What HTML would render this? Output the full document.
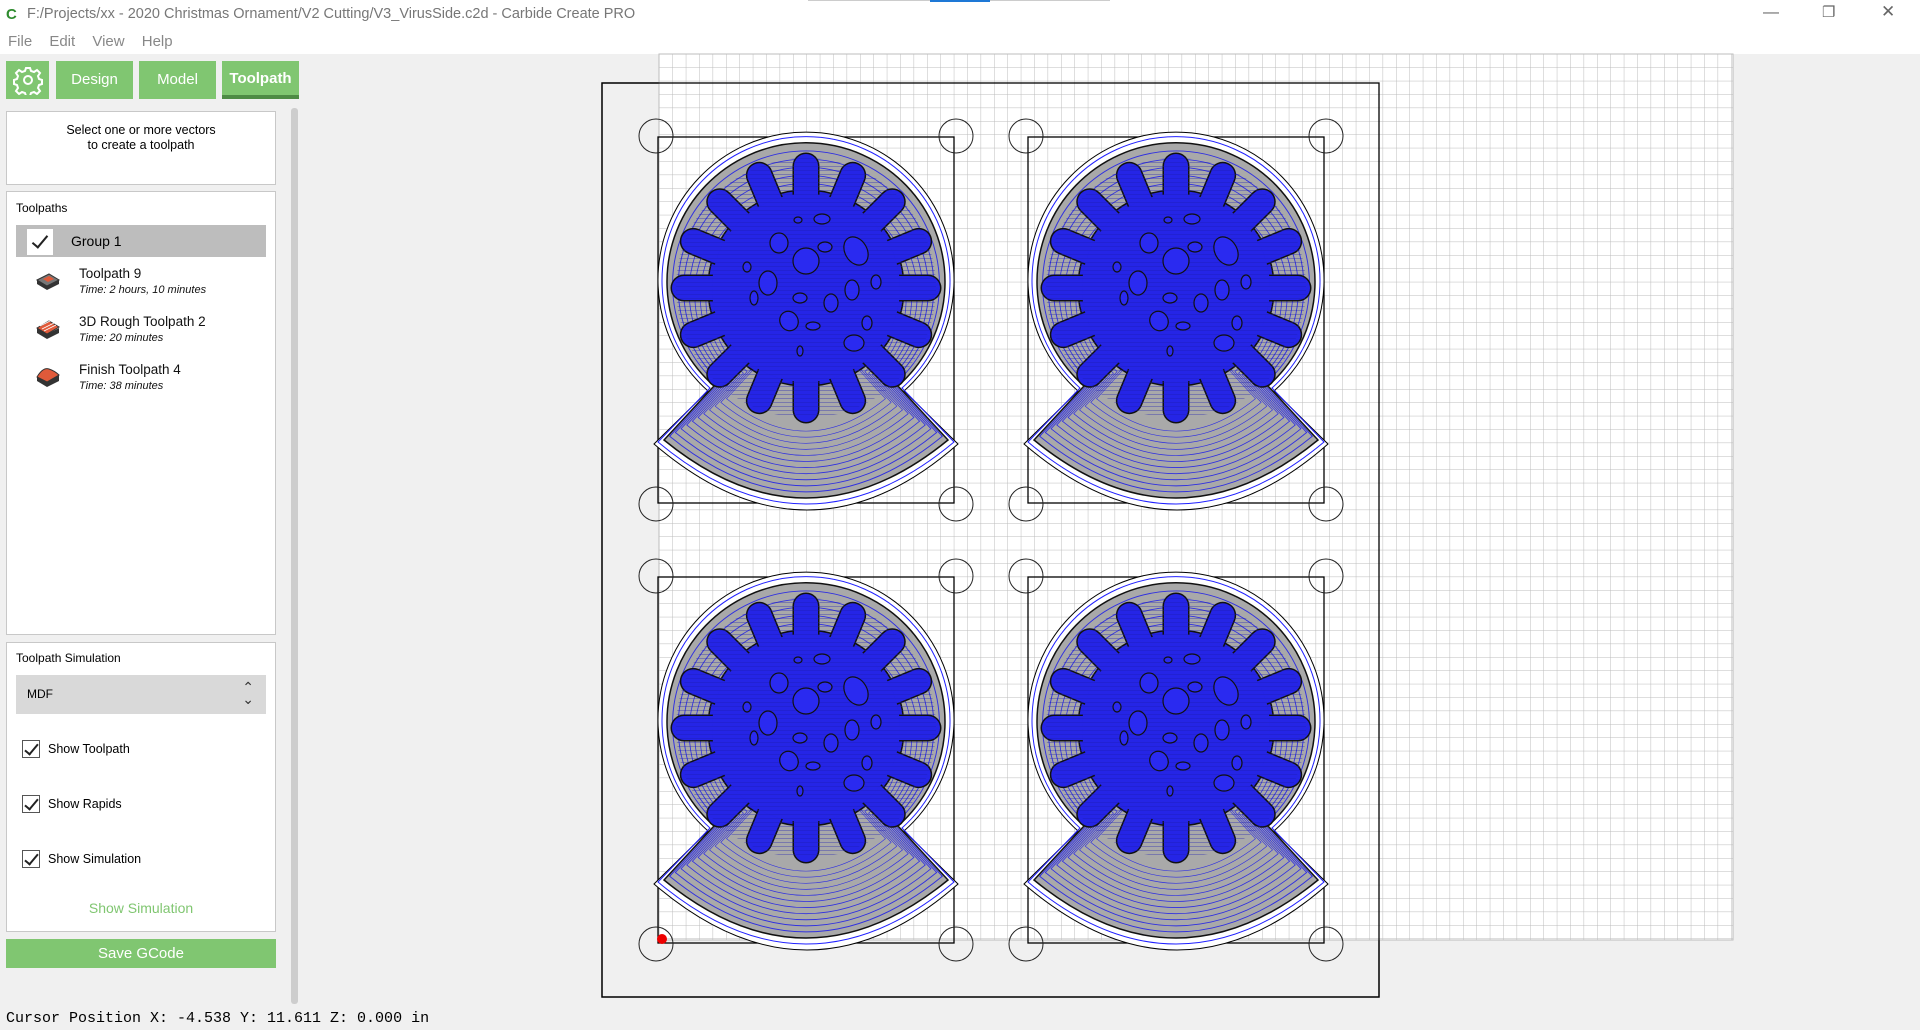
<!DOCTYPE html>
<html><head><meta charset="utf-8"><style>
*{margin:0;padding:0;box-sizing:border-box}
body{width:1920px;height:1030px;background:#f0f0f0;font-family:"Liberation Sans",sans-serif;position:relative;overflow:hidden}
.a{position:absolute}
.tab{position:absolute;top:61px;height:38px;background:#80c671;color:#fff;font-size:15px;text-align:center;line-height:38px}
.box{position:absolute;background:#fff;border:1px solid #c8c8c8}
.cb{position:absolute;width:18px;height:18px;border:1px solid #555;background:#fff}
.cb:after{content:"";position:absolute;left:5px;top:0px;width:5px;height:12px;border-right:2px solid #222;border-bottom:2px solid #222;transform:rotate(40deg)}
.it{position:absolute;left:72px;font-size:13.5px;color:#111}
.it i{display:block;font-size:11px;margin-top:3px}
</style></head><body>
<div class="a" style="left:0;top:0;width:1920px;height:54px;background:#fff"></div>
<div class="a" style="left:6px;top:6px;color:#2e8b2e;font-weight:bold;font-size:15px">C</div>
<div class="a" style="left:27px;top:6px;font-size:14.5px;color:#777">F:/Projects/xx - 2020 Christmas Ornament/V2 Cutting/V3_VirusSide.c2d - Carbide Create PRO</div>
<div class="a" style="left:808px;top:0;width:302px;height:1px;background:#ccc"></div>
<div class="a" style="left:930px;top:0;width:60px;height:2px;background:#1e78d6"></div>
<div class="a" style="left:1763px;top:4px;font-size:16px;color:#666">—</div>
<div class="a" style="left:1822px;top:3px;font-size:15px;color:#666">❐</div>
<div class="a" style="left:1881px;top:2px;font-size:17px;color:#666">✕</div>
<div class="a" style="left:8px;top:33px;font-size:15px;color:#888;word-spacing:13px">File Edit View Help</div>

<div class="tab" style="left:6px;width:43px"><svg width="30" height="30" viewBox="0 0 30 30" style="margin-top:4px"><circle cx="15" cy="15" r="4" fill="none" stroke="#fff" stroke-width="2"/><path d="M13 3h4l1 3 3 1 3-2 3 3-2 3 1 3 3 1v4l-3 1-1 3 2 3-3 3-3-2-3 1-1 3h-4l-1-3-3-1-3 2-3-3 2-3-1-3-3-1v-4l3-1 1-3-2-3 3-3 3 2 3-1z" fill="none" stroke="#fff" stroke-width="2"/></svg></div>
<div class="tab" style="left:56px;width:77px">Design</div>
<div class="tab" style="left:139px;width:77px">Model</div>
<div class="tab" style="left:222px;width:77px;font-weight:bold;border-bottom:4px solid #4e8b45;line-height:36px">Toolpath</div>

<div class="box" style="left:6px;top:111px;width:270px;height:74px"><div style="text-align:center;font-size:12.5px;margin-top:11px;line-height:15px">Select one or more vectors<br>to create a toolpath</div></div>
<div class="box" style="left:6px;top:191px;width:270px;height:444px">
<div class="a" style="left:9px;top:9px;font-size:12px">Toolpaths</div>
<div class="a" style="left:9px;top:33px;width:250px;height:32px;background:#bdbdbd"></div>
<div class="a" style="left:20px;top:37px;width:26px;height:26px;background:#fff"><div style="position:absolute;left:9px;top:3px;width:8px;height:16px;border-right:2px solid #222;border-bottom:2px solid #222;transform:rotate(40deg)"></div></div>
<div class="a" style="left:64px;top:41px;font-size:14px">Group 1</div>
<svg class="a" style="left:28px;top:78px" width="26" height="150"><g><path d="M2 10l12-6 10 6-12 6z" fill="#777" stroke="#333"/><path d="M2 10v4l10 6 12-6v-4l-12 6z" fill="#333"/><path d="M8 9l6-3 5 3-6 3z" fill="#e05a3a"/></g><g transform="translate(0,48)"><path d="M2 10l12-7 10 6-12 7z" fill="#e05a3a" stroke="#333"/><path d="M2 10v5l10 6 12-6v-5l-12 6z" fill="#333"/><path d="M5 8l12-6M7 11l12-6M9 13l12-6" stroke="#fff" stroke-width=".8"/></g><g transform="translate(0,96)"><path d="M2 11q6-10 12-8q6 2 10 6l-12 7z" fill="#e05a3a" stroke="#333"/><path d="M2 11v4l10 6 12-6v-6l-12 7z" fill="#333"/></g></svg>
<div class="it" style="top:74px">Toolpath 9<i>Time: 2 hours, 10 minutes</i></div>
<div class="it" style="top:122px">3D Rough Toolpath 2<i>Time: 20 minutes</i></div>
<div class="it" style="top:170px">Finish Toolpath 4<i>Time: 38 minutes</i></div>
</div>
<div class="box" style="left:6px;top:642px;width:270px;height:290px">
<div class="a" style="left:9px;top:8px;font-size:12px">Toolpath Simulation</div>
<div class="a" style="left:9px;top:32px;width:250px;height:39px;background:#d9d9d9;font-size:12px;padding:12px 11px">MDF<span style="position:absolute;right:12px;top:6px;font-size:14px;line-height:12px;color:#333">⌃<br>⌄</span></div>
<div class="cb" style="left:15px;top:97px"></div><div class="a" style="left:41px;top:99px;font-size:12.5px">Show Toolpath</div>
<div class="cb" style="left:15px;top:152px"></div><div class="a" style="left:41px;top:154px;font-size:12.5px">Show Rapids</div>
<div class="cb" style="left:15px;top:207px"></div><div class="a" style="left:41px;top:209px;font-size:12.5px">Show Simulation</div>
<div class="a" style="left:0;width:268px;top:257px;text-align:center;font-size:14px;color:#80c671">Show Simulation</div>
</div>
<div class="a" style="left:6px;top:939px;width:270px;height:29px;background:#80c671;color:#fff;font-size:15px;text-align:center;line-height:29px">Save GCode</div>
<div class="a" style="left:291px;top:108px;width:7px;height:896px;background:#cdcdcd;border-radius:3px"></div>
<div class="a" style="left:6px;top:1010px;font-family:'Liberation Mono',monospace;font-size:15px">Cursor Position X: -4.538 Y: 11.611 Z: 0.000 in</div>

<svg class="a" style="left:0;top:0" width="1920" height="1030">
<defs>
<pattern id="g" x="659" y="54" width="13.4" height="13.4" patternUnits="userSpaceOnUse"><path d="M0 0H13.4M0 0V13.4" stroke="#bcbcbc" stroke-width="1"/></pattern>
<pattern id="h" width="4" height="4" patternUnits="userSpaceOnUse"><path d="M0 .5H4" stroke="#1a1ab0" stroke-width=".7"/></pattern>
<path id="sh" d="M56 240 A139 139 0 1 1 240 240 L290 294 Q148 410 6 294 Z"/>
<line id="f" x1="148" y1="52" x2="148" y2="20"/>
<g id="fs">
<use href="#f" transform="rotate(0 148 142)"/><use href="#f" transform="rotate(22.5 148 142)"/><use href="#f" transform="rotate(45 148 142)"/><use href="#f" transform="rotate(67.5 148 142)"/><use href="#f" transform="rotate(90 148 142)"/><use href="#f" transform="rotate(112.5 148 142)"/><use href="#f" transform="rotate(135 148 142)"/><use href="#f" transform="rotate(157.5 148 142)"/><use href="#f" transform="rotate(180 148 142)"/><use href="#f" transform="rotate(202.5 148 142)"/><use href="#f" transform="rotate(225 148 142)"/><use href="#f" transform="rotate(247.5 148 142)"/><use href="#f" transform="rotate(270 148 142)"/><use href="#f" transform="rotate(292.5 148 142)"/><use href="#f" transform="rotate(315 148 142)"/><use href="#f" transform="rotate(337.5 148 142)"/>
</g>
<g id="o">
<rect x="0" y="0" width="296" height="366" fill="none" stroke="#000" stroke-width="1.3"/>
<circle cx="-2" cy="-1" r="17" fill="none" stroke="#222"/><circle cx="298" cy="-1" r="17" fill="none" stroke="#222"/>
<circle cx="-2" cy="367" r="17" fill="none" stroke="#222"/><circle cx="298" cy="367" r="17" fill="none" stroke="#222"/>
<g transform="translate(0,9)">
<path d="M50 245 A148 148 0 1 1 246 245 L300 298 Q150 430 -4 298 Z" fill="#fff" stroke="#000"/>
<path d="M52 242 A144 144 0 1 1 244 242 L296 296 Q148 420 0 296 Z" fill="none" stroke="#2020ff" stroke-width="1"/>
<use href="#sh" fill="#a9a9a9" stroke="#111" stroke-width="1.5"/>
<g fill="none" stroke="#3030e0" stroke-width="1">
<use href="#sh" transform="translate(148 200) scale(.96) translate(-148 -200)"/>
<use href="#sh" transform="translate(148 200) scale(.92) translate(-148 -200)"/>
<use href="#sh" transform="translate(148 200) scale(.88) translate(-148 -200)"/>
<use href="#sh" transform="translate(148 200) scale(.84) translate(-148 -200)"/>
<use href="#sh" transform="translate(148 200) scale(.80) translate(-148 -200)"/>
<use href="#sh" transform="translate(148 200) scale(.76) translate(-148 -200)"/>
<use href="#sh" transform="translate(148 200) scale(.72) translate(-148 -200)"/>
<use href="#sh" transform="translate(148 200) scale(.68) translate(-148 -200)"/>
<use href="#sh" transform="translate(148 200) scale(.64) translate(-148 -200)"/>
<use href="#sh" transform="translate(148 200) scale(.60) translate(-148 -200)"/>
<use href="#sh" transform="translate(148 200) scale(.56) translate(-148 -200)"/>
</g>
<circle cx="148" cy="142" r="98" fill="#2525e6" stroke="#111" stroke-width="1.5"/>
<use href="#fs" stroke="#111" stroke-width="27" stroke-linecap="round"/>
<use href="#fs" stroke="#2525e6" stroke-width="24" stroke-linecap="round"/>
<circle cx="148" cy="142" r="94" fill="#2525e6"/>
<circle cx="148" cy="142" r="130" fill="url(#h)" opacity=".5"/>
<g fill="#2a2af0" stroke="#111" stroke-width="1.2">
<circle cx="148" cy="115" r="13"/><ellipse cx="110" cy="137" rx="9" ry="12"/><ellipse cx="198" cy="105" rx="11" ry="15" transform="rotate(-30 198 105)"/><ellipse cx="121" cy="97" rx="9" ry="10"/><ellipse cx="173" cy="157" rx="7" ry="9"/><ellipse cx="131" cy="175" rx="9" ry="10" transform="rotate(-30 131 175)"/><ellipse cx="196" cy="197" rx="10" ry="8"/><ellipse cx="218" cy="136" rx="5" ry="7"/><ellipse cx="194" cy="144" rx="7" ry="10"/><ellipse cx="164" cy="73" rx="8" ry="5"/><ellipse cx="167" cy="101" rx="7" ry="5"/><ellipse cx="89" cy="121" rx="4" ry="5"/><ellipse cx="142" cy="152" rx="7" ry="5"/><ellipse cx="96" cy="152" rx="4" ry="7"/><ellipse cx="155" cy="180" rx="7" ry="4"/><ellipse cx="140" cy="74" rx="4" ry="3"/><ellipse cx="142" cy="205" rx="3" ry="5"/><ellipse cx="209" cy="177" rx="5" ry="7"/>
</g>
</g>
</g>
</defs>
<rect x="602" y="83" width="777" height="914" fill="#f0f0f0" stroke="#000" stroke-width="1.3"/>
<rect x="659" y="54" width="1074" height="886" fill="#fff"/>
<rect x="659" y="54" width="1074" height="886" fill="url(#g)" stroke="#bcbcbc"/>
<rect x="602" y="83" width="777" height="914" fill="none" stroke="#000" stroke-width="1.3"/>
<use href="#o" x="658" y="137"/>
<use href="#o" x="1028" y="137"/>
<use href="#o" x="658" y="577"/>
<use href="#o" x="1028" y="577"/>
<circle cx="662" cy="939" r="5" fill="#e00"/>
</svg>
</body></html>
